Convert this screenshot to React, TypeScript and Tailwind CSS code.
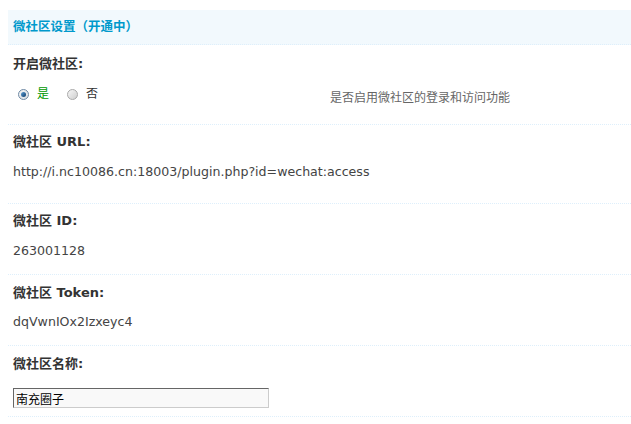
import React from 'react';

const font = "font-['DejaVu_Sans','Noto_Sans_CJK_SC',sans-serif]";

function Radio({ checked }: { checked: boolean }) {
  return (
    <span
      className={
        'inline-flex items-center justify-center w-[11px] h-[11px] rounded-full border ' +
        (checked
          ? 'border-[#6f8aa5] bg-gradient-to-br from-[#f4f4f4] to-[#d8dde2]'
          : 'border-[#a9a9a9] bg-gradient-to-br from-[#f6f6f6] to-[#cfcfcf]')
      }
    >
      {checked && (
        <span className="block w-[5px] h-[5px] rounded-full bg-gradient-to-br from-[#5d9fd6] to-[#0d3d6b]" />
      )}
    </span>
  );
}

function Row({
  label,
  children,
  pt,
  gap,
  pb,
  first,
}: {
  label: string;
  children: React.ReactNode;
  pt: string;
  gap: string;
  pb: string;
  first?: boolean;
}) {
  return (
    <div className={'ml-[8px] pl-[5px] ' + (first ? '' : 'border-t border-dotted border-[#DEEFFB] ') + pt + ' ' + pb}>
      <div className="leading-[18px] font-bold text-[#333] text-[13px]">{label}</div>
      <div className={gap}>{children}</div>
    </div>
  );
}

export default function App() {
  return (
    <div className={'w-[631px] h-[424px] bg-white text-[12px] overflow-hidden ' + font}>
      <div className="h-[10px]" />
      {/* section title */}
      <div className="ml-[8px] h-[35px] pl-[5px] flex items-center bg-[#F2F9FD] border-b border-dotted border-[#DEEFFB] text-[#09C] font-bold text-[12.5px]">
        微社区设置（开通中）
      </div>

      <Row label="开启微社区:" pt="pt-[10px]" gap="mt-[12px]" pb="pb-[21px]" first>
        <div className="flex items-start h-[18px] leading-[18px]">
          <div className="w-[317px] h-[18px] flex items-center">
            <span className="ml-[5px] mr-[8px] flex">
              <Radio checked />
            </span>
            <span className="text-[#090]">是</span>
            <span className="ml-[18px] mr-[8px] flex">
              <Radio checked={false} />
            </span>
            <span className="text-[#333]">否</span>
          </div>
          <div className="text-[#666] mt-[4px]">是否启用微社区的登录和访问功能</div>
        </div>
      </Row>

      <Row label="微社区 URL:" pt="pt-[8px]" gap="mt-[12px]" pb="pb-[22px]">
        <div className="leading-[18px] text-[#444] text-[12.6px]">http://i.nc10086.cn:18003/plugin.php?id=wechat:access</div>
      </Row>

      <Row label="微社区 ID:" pt="pt-[8px]" gap="mt-[12px]" pb="pb-[14px]">
        <div className="leading-[18px] text-[#444] text-[12.6px]">263001128</div>
      </Row>

      <Row label="微社区 Token:" pt="pt-[9px]" gap="mt-[11px]" pb="pb-[14px]">
        <div className="leading-[18px] text-[#444] text-[12.6px]">dqVwnIOx2Izxeyc4</div>
      </Row>

      <Row label="微社区名称:" pt="pt-[9px]" gap="mt-[15px]" pb="pb-[8px]">
        <input
          type="text"
          defaultValue="南充圈子"
          className="block w-[256px] h-[20px] px-[2px] border border-t-[#666] border-l-[#666] border-b-[#ccc] border-r-[#ccc] bg-[#f9f9f9] text-[12px] text-black leading-[18px] outline-none"
        />
      </Row>
      <div className="ml-[8px] border-t border-dotted border-[#DEEFFB]" />
    </div>
  );
}
